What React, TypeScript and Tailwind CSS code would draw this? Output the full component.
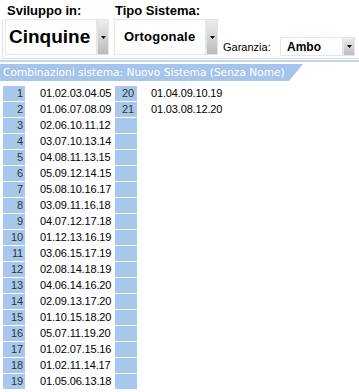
import React from "react";

const left = [
  "01.02.03.04.05",
  "01.06.07.08.09",
  "02.06.10.11.12",
  "03.07.10.13.14",
  "04.08.11.13.15",
  "05.09.12.14.15",
  "05.08.10.16.17",
  "03.09.11.16.18",
  "04.07.12.17.18",
  "01.12.13.16.19",
  "03.06.15.17.19",
  "02.08.14.18.19",
  "04.06.14.16.20",
  "02.09.13.17.20",
  "01.10.15.18.20",
  "05.07.11.19.20",
  "01.02.07.15.16",
  "01.02.11.14.17",
  "01.05.06.13.18",
];
const right = ["01.04.09.10.19", "01.03.08.12.20"];

function Arrow() {
  return (
    <svg width="5" height="3" viewBox="0 0 5 3" className="block">
      <polygon points="0,0 5,0 2.5,3" fill="#000" />
    </svg>
  );
}

function DropButton({ h }: { h: string }) {
  return (
    <div
      className={`${h} w-[12px] flex items-center justify-center border border-[#e4e4e4] bg-gradient-to-b from-[#ececec] via-[#d4d4d4] to-[#bcbcbc]`}
    >
      <Arrow />
    </div>
  );
}

export default function App() {
  return (
    <div className="w-[359px] h-[392px] bg-white overflow-hidden font-['Liberation_Sans',Arial,sans-serif] text-black">
      <div className="flex h-[19px] pt-[2px] text-[13px] font-bold leading-[17px]">
        <span className="ml-[7px] w-[108px]">Sviluppo in:</span>
        <span>Tipo Sistema:</span>
      </div>
      <div className="ml-[2px] h-[40px] border-l border-b border-[#dde2e8] flex items-start pl-[2px]">
        <div className="flex">
          <div className="w-[92px] h-[36px] border border-[#e6e6e6] flex items-center pl-[3px] text-[19px] font-bold">
            Cinquine
          </div>
          <DropButton h="h-[36px]" />
        </div>
        <div className="flex ml-[5px]">
          <div className="w-[92px] h-[36px] border border-[#e6e6e6] flex items-center pl-[9px] text-[13px] font-bold tracking-[0.2px]">
            Ortogonale
          </div>
          <DropButton h="h-[36px]" />
        </div>
        <div className="flex items-center ml-[5px] mt-[17px]">
          <span className="w-[57px] text-[11px] leading-[19px] pt-[2px]">Garanzia:</span>
          <div className="w-[63px] h-[19px] border border-[#e6e6e6] flex items-center pl-[6px] text-[12px] font-bold">
            Ambo
          </div>
          <DropButton h="h-[19px]" />
        </div>
      </div>
      <div className="mt-[1px] h-[2px] bg-[#c2d6ef]" />
      <div className="h-[2px]" />
      <div className="w-[303px] h-[17px] bg-[#a6c5eb] text-white text-[10.6px] leading-[17px] pl-[3px] font-['DejaVu_Sans',Verdana,sans-serif] [clip-path:polygon(0_0,100%_0,calc(100%-14px)_100%,0_100%)]">
        Combinazioni sistema: Nuovo Sistema (Senza Nome)
      </div>
      <div className="mt-[5px] text-[11px] leading-[15px] tracking-[-0.15px]">
        {left.map((c, i) => (
          <div key={i} className="flex h-[16px] pl-[3px]">
            <div className="w-[22px] h-[15px] bg-[#a8c7ed] text-right pr-[2px] text-[#333]">
              {i + 1}
            </div>
            <div className="w-[90px] pl-[15px]">{c}</div>
            <div className="w-[22px] h-[15px] bg-[#a8c7ed] text-right pr-[3px] text-[#333]">
              {right[i] ? i + 20 : ""}
            </div>
            <div className="pl-[14px]">{right[i] ?? ""}</div>
          </div>
        ))}
      </div>
    </div>
  );
}
